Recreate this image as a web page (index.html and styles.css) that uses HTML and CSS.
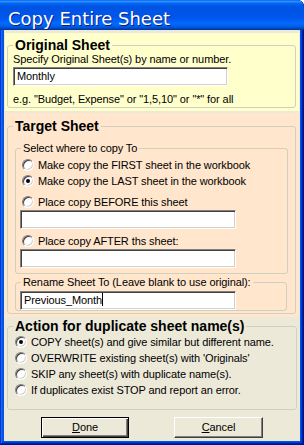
FILE: index.html
```html
<!DOCTYPE html>
<html>
<head>
<meta charset="utf-8">
<title>Copy Entire Sheet</title>
<link rel="stylesheet" href="styles.css">
</head>
<body>
<div class="window">
  <div class="titlebar"><span class="title">Copy Entire Sheet</span></div>
  <div class="client">
    <div class="panel panel-yellow">
      <fieldset class="group group-main">
        <legend class="legend-bold">Original Sheet</legend>
        <div class="line">Specify Original Sheet(s) by name or number.</div>
        <div class="field field-orig">Monthly</div>
        <div class="line hint">e.g. "Budget, Expense" or "1,5,10" or "*" for all</div>
      </fieldset>
    </div>
    <div class="panel panel-peach">
      <fieldset class="group group-main group-target">
        <legend class="legend-bold">Target Sheet</legend>
        <fieldset class="group group-inner group-where">
          <legend class="legend-small">Select where to copy To</legend>
          <div class="option option-first"><span class="radio"></span><span>Make copy the FIRST sheet in the workbook</span></div>
          <div class="option"><span class="radio checked"></span><span>Make copy the LAST sheet in the workbook</span></div>
          <div class="option option-gap"><span class="radio"></span><span>Place copy BEFORE this sheet</span></div>
          <div class="field field-inner"></div>
          <div class="option option-gap2"><span class="radio"></span><span>Place copy AFTER ths sheet:</span></div>
          <div class="field field-inner"></div>
        </fieldset>
        <fieldset class="group group-inner group-rename">
          <legend class="legend-small">Rename Sheet To (Leave blank to use original):</legend>
          <div class="field field-inner field-rename">Previous_Month<span class="caret"></span></div>
        </fieldset>
      </fieldset>
    </div>
    <fieldset class="group group-main group-action">
      <legend class="legend-bold">Action for duplicate sheet name(s)</legend>
      <div class="option option-action"><span class="radio checked"></span><span>COPY sheet(s) and give similar but different name.</span></div>
      <div class="option option-action"><span class="radio"></span><span>OVERWRITE existing sheet(s) with 'Originals'</span></div>
      <div class="option option-action"><span class="radio"></span><span>SKIP any sheet(s) with duplicate name(s).</span></div>
      <div class="option option-action"><span class="radio"></span><span>If duplicates exist STOP and report an error.</span></div>
    </fieldset>
    <div class="buttons">
      <div class="button button-default"><span><u>D</u>one</span></div>
      <div class="button button-cancel"><span><u>C</u>ancel</span></div>
    </div>
  </div>
</div>
</body>
</html>
```
FILE: styles.css
```css
* { box-sizing: border-box; }
html, body { margin: 0; padding: 0; background: #ffffff; }
body {
  width: 304px;
  height: 445px;
  overflow: hidden;
  font-family: "Liberation Sans", Arial, sans-serif;
  font-size: 11px;
  letter-spacing: -0.1px;
  color: #000000;
}
.window {
  width: 304px;
  height: 445px;
  display: flex;
  flex-direction: column;
  background: #0054e3;
  border-radius: 0 7px 0 0;
  box-shadow: inset -1px -1px #00138c, inset 1px 1px #0831d9, inset -2px -2px #001ea0, inset 2px 2px #166aee, inset -3px -3px #003bda, inset 3px 3px #0855dd;
}
.titlebar {
  height: 30px;
  flex: none;
  border-radius: 0 7px 0 0;
  background: linear-gradient(to bottom, #0058ee 0%, #3593ff 4%, #288eff 6%, #127dff 8%, #036ffc 10%, #0262ee 14%, #0057e5 20%, #0054e3 24%, #0055eb 56%, #005bf5 66%, #026afe 76%, #0062ef 86%, #0052d6 92%, #0040ab 97%, #003092 100%);
  padding: 8px 0 0 8px;
}
.title {
  display: block;
  font-family: "DejaVu Sans", Verdana, sans-serif;
  font-size: 18px;
  line-height: 21px;
  letter-spacing: 0;
  color: #ffffff;
  text-shadow: 1px 1px #0a1e80;
}
.client {
  flex: 1;
  margin: 0 4px 4px 4px;
  background: #ece9d8;
  padding: 3px 0 0 0;
  display: flex;
  flex-direction: column;
}
.panel {
  margin: 0 1px;
}
.panel-yellow {
  background: #ffffcc;
  padding: 4px 3px 3px 2px;
}
.panel-peach {
  background: #ffe6cc;
  margin-top: 2px;
  padding: 5px 3px 3px 2px;
}
.group {
  margin: 0;
  min-width: 0;
  border: 1px solid #d0d0bf;
  border-radius: 3px;
}
.group-main {
  padding: 0 5px 1px 5px;
}
.legend-bold {
  padding: 0 2px;
  font-weight: bold;
  font-size: 14px;
  line-height: 16px;
  letter-spacing: 0;
}
.legend-small {
  padding: 0 2px;
  margin-left: 1px;
  font-size: 11px;
  line-height: 13px;
}
.line {
  line-height: 13px;
  white-space: nowrap;
}
.hint {
  margin-top: 7px;
}
.field {
  height: 19px;
  background: #ffffff;
  border: 1px solid;
  border-color: #808080 #ffffff #ffffff #808080;
  box-shadow: inset 1px 1px #404040, inset -1px -1px #d4d0c8;
  padding: 1px 3px 0 3px;
  line-height: 15px;
  white-space: nowrap;
}
.field-orig {
  width: 215px;
  margin-top: 1px;
}
.field-inner {
  width: 216px;
}
.group-target {
  padding: 0 7px 2px 5px;
}
.group-inner {
  padding: 0 0 5px 4px;
  margin-left: 2px;
}
.group-where {
  margin-top: 8px;
}
.group-rename {
  margin-top: 2px;
  margin-right: 1px;
  padding-bottom: 0;
}
.field-rename {
  margin-top: 2px;
}
.caret {
  display: inline-block;
  width: 1px;
  height: 13px;
  background: #000000;
  vertical-align: -2px;
}
.option {
  display: flex;
  align-items: center;
  gap: 4px;
  height: 16px;
  line-height: 13px;
  white-space: nowrap;
  margin-left: 2px;
}
.option-first { margin-top: 2px; }
.option-gap { margin-top: 5px; }
.option-gap2 { margin-top: 4px; }
.radio {
  position: relative;
  flex: none;
  width: 12px;
  height: 12px;
  border-radius: 50%;
  background: #ffffff;
  border: 1px solid;
  border-color: #808080 #ffffff #ffffff #808080;
  box-shadow: inset 1px 1px #404040, inset -1px -1px #d4d0c8;
}
.radio.checked::after {
  content: "";
  position: absolute;
  left: 3px;
  top: 3px;
  width: 4px;
  height: 4px;
  border-radius: 50%;
  background: #000000;
}
.group-action {
  margin: 1px 3px 0 3px;
  padding: 0 5px 11px 5px;
}
.buttons {
  display: flex;
  margin-top: 7px;
  padding-left: 37px;
  gap: 45px;
}
.button {
  height: 21px;
  display: flex;
  align-items: center;
  justify-content: center;
  background: #ece9d8;
  line-height: 13px;
}
.button-default {
  width: 88px;
  border: 1px solid #000000;
  box-shadow: inset 1px 1px #ffffff, inset -1px -1px #404040, inset -2px -2px #808080;
}
.button-cancel {
  width: 89px;
  border: 1px solid;
  border-color: #ffffff #404040 #404040 #ffffff;
  box-shadow: inset -1px -1px #808080;
}
```
